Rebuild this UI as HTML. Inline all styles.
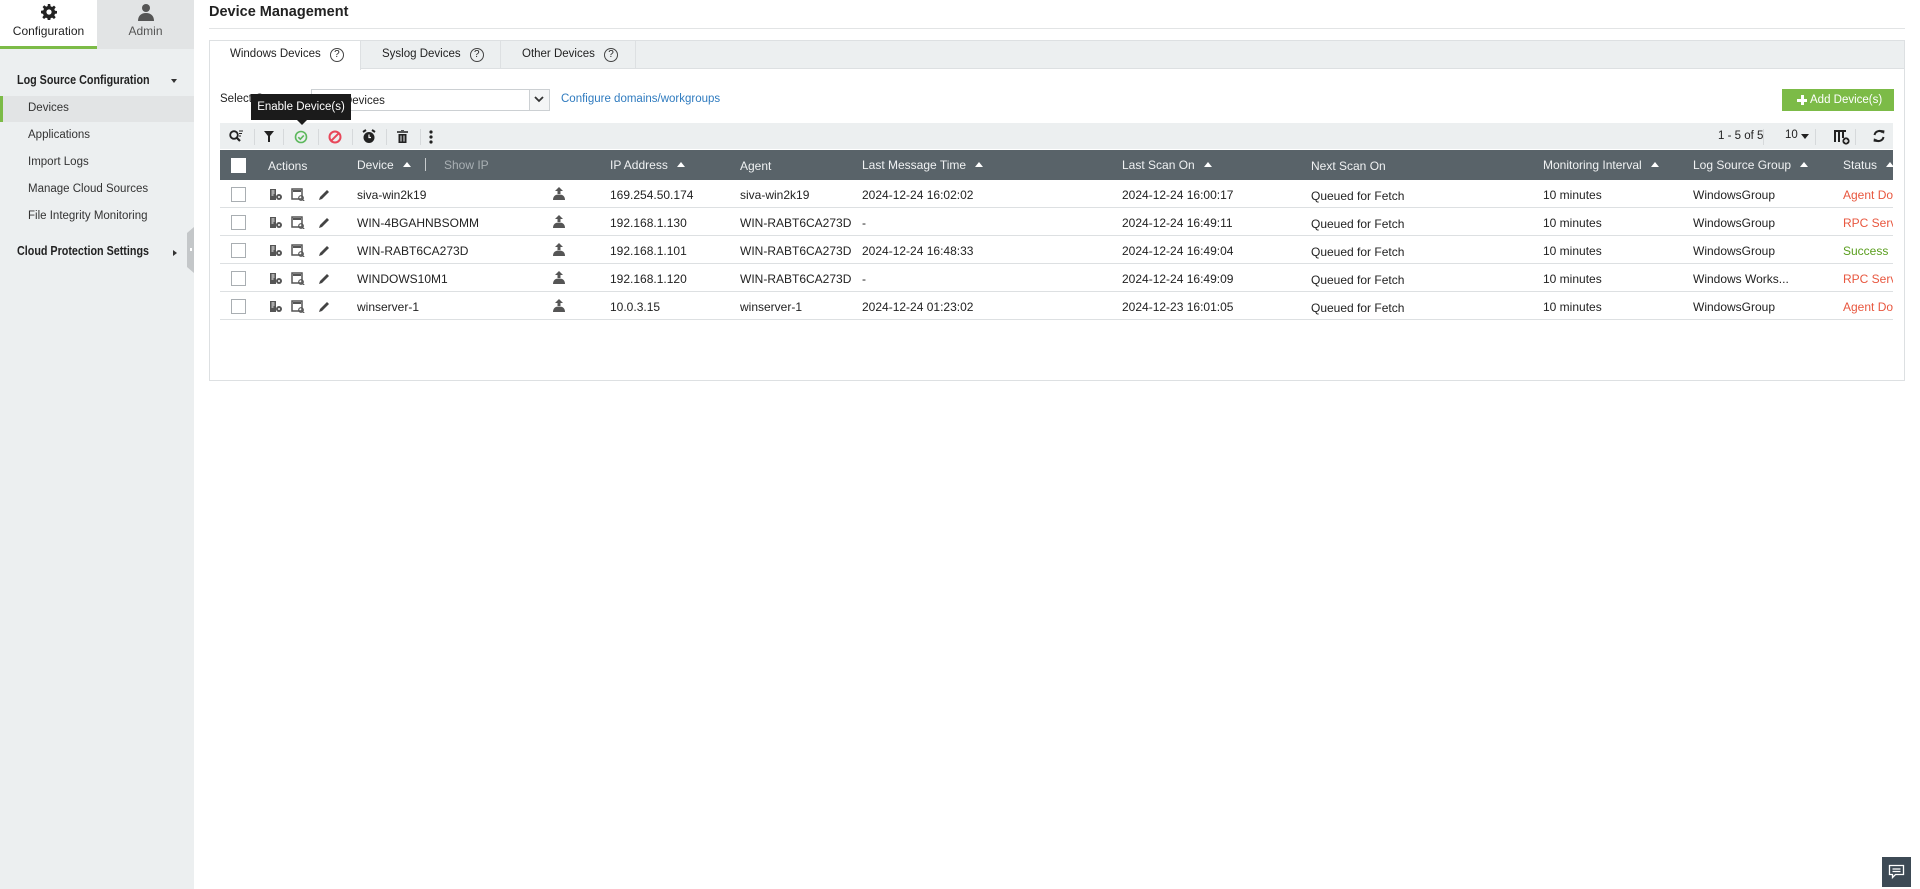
<!DOCTYPE html>
<html><head><meta charset="utf-8">
<style>
*{box-sizing:border-box;margin:0;padding:0}
body{width:1920px;height:889px;position:relative;background:#fff;font-family:"Liberation Sans",sans-serif;font-size:12px;color:#222;overflow:hidden}
.a{position:absolute}
.side{left:0;top:0;width:194px;height:889px;background:#eceff0}
.hdr{left:220px;top:150px;width:1673px;height:30px;background:#596369;color:#f0f2f3}
.hdr div{white-space:nowrap}
.row{left:220px;width:1673px;height:28px;border-bottom:1px solid #dde0e2}
.cb{width:15px;height:15px;border:1px solid #a9aeb2;background:#fff}
.tri{display:inline-block;width:0;height:0;border-left:4px solid transparent;border-right:4px solid transparent;border-bottom:5px solid #fff;margin-left:9px;vertical-align:2px}
.sep{width:1px;height:16px;background:#d6d9db;top:129px}
.red{color:#e8573f}.grn{color:#5a9e1e}
.sh{font-weight:bold;font-size:12.5px;transform:scaleX(0.86);transform-origin:left;white-space:nowrap}
</style></head><body>
<div class="a side"></div>
<div class="a" style="left:0;top:0;width:97px;height:46px;background:#fff"></div>
<div class="a" style="left:0;top:46px;width:97px;height:3px;background:#7cbb47"></div>
<div class="a" style="left:97px;top:0;width:97px;height:49px;background:#e2e4e5"></div>
<svg class="a" style="left:41px;top:4px" width="16" height="16" viewBox="0 0 16 16"><path fill="#222" d="M6.8 0h2.4l.4 2.3 1.5.7 1.9-1.4 1.7 1.7-1.4 1.9.7 1.5 2.3.4v2.4l-2.3.4-.7 1.5 1.4 1.9-1.7 1.7-1.9-1.4-1.5.7-.4 2.3H6.8l-.4-2.3-1.5-.7-1.9 1.4-1.7-1.7 1.4-1.9-.7-1.5L0 9.2V6.8l2.3-.4.7-1.5-1.4-1.9 1.7-1.7 1.9 1.4 1.5-.7z"/><circle cx="8" cy="8" r="2.6" fill="#fff"/></svg>
<div class="a" style="left:0;top:24px;width:97px;text-align:center;font-size:12px;color:#222">Configuration</div>
<svg class="a" style="left:137px;top:3px" width="18" height="18" viewBox="0 0 18 18"><circle cx="9" cy="5" r="4" fill="#555"/><path fill="#555" d="M1 18c0-5 3-8 8-8s8 3 8 8z"/></svg>
<div class="a" style="left:97px;top:24px;width:97px;text-align:center;color:#555">Admin</div>
<div class="a sh" style="left:17px;top:73px">Log Source Configuration</div>
<div class="a" style="left:171px;top:79px;border-left:3.5px solid transparent;border-right:3.5px solid transparent;border-top:4px solid #333"></div>
<div class="a" style="left:0;top:96px;width:194px;height:26px;background:#e2e4e5;border-left:3px solid #7cbb47"></div>
<div class="a" style="left:28px;top:102px;font-size:11.5px;color:#333">Devices</div>
<div class="a" style="left:28px;top:129px;font-size:11.5px;color:#333">Applications</div>
<div class="a" style="left:28px;top:156px;font-size:11.5px;color:#333">Import Logs</div>
<div class="a" style="left:28px;top:183px;font-size:11.5px;color:#333">Manage Cloud Sources</div>
<div class="a" style="left:28px;top:210px;font-size:11.5px;color:#333">File Integrity Monitoring</div>
<div class="a sh" style="left:17px;top:244px">Cloud Protection Settings</div>
<div class="a" style="left:173px;top:250px;border-top:3.5px solid transparent;border-bottom:3.5px solid transparent;border-left:4px solid #333"></div>
<svg class="a" style="left:187px;top:227px" width="7" height="46"><path d="M7 0V46L0 40V6z" fill="#c4c7c9"/><rect x="3" y="21" width="2" height="3" fill="#fff"/></svg>
<div class="a" style="left:209px;top:4px;font-size:14.5px;font-weight:bold;color:#222">Device Management</div>
<div class="a" style="left:209px;top:28px;width:1696px;height:1px;background:#e2e4e5"></div>
<div class="a" style="left:209px;top:40px;width:1696px;height:341px;border:1px solid #dde0e2"></div>
<div class="a" style="left:210px;top:41px;width:1694px;height:28px;background:#eceff0;border-bottom:1px solid #dde0e2"></div>
<div class="a" style="left:210px;top:41px;width:151px;height:29px;background:#fff;border-right:1px solid #dde0e2"></div>
<div class="a" style="left:361px;top:41px;width:140px;height:28px;border-right:1px solid #dde0e2"></div>
<div class="a" style="left:501px;top:41px;width:135px;height:28px;border-right:1px solid #dde0e2"></div>
<div class="a" style="left:230px;top:48px;font-size:11.5px">Windows Devices <span style="display:inline-block;width:14px;height:14px;border:1px solid #444;border-radius:50%;text-align:center;font-size:10px;line-height:12px;margin-left:6px">?</span></div>
<div class="a" style="left:382px;top:48px;font-size:11.5px">Syslog Devices <span style="display:inline-block;width:14px;height:14px;border:1px solid #444;border-radius:50%;text-align:center;font-size:10px;line-height:12px;margin-left:6px">?</span></div>
<div class="a" style="left:522px;top:48px;font-size:11.5px">Other Devices <span style="display:inline-block;width:14px;height:14px;border:1px solid #444;border-radius:50%;text-align:center;font-size:10px;line-height:12px;margin-left:6px">?</span></div>
<div class="a" style="left:220px;top:93px;font-size:11.5px">Select Category</div>
<div class="a" style="left:311px;top:89px;width:239px;height:22px;border:1px solid #ccd0d3;background:#fff"></div>
<div class="a" style="left:328px;top:95px;font-size:11.5px">All Devices</div>
<div class="a" style="left:529px;top:90px;width:20px;height:20px;border-left:1px solid #ccd0d3;background:#f4f5f6"></div>
<svg class="a" style="left:534px;top:96px" width="10" height="8"><path d="M1 1l4 4 4-4" stroke="#333" stroke-width="1.8" fill="none"/></svg>
<div class="a" style="left:561px;top:93px;font-size:11.5px;color:#2f7bbf">Configure domains/workgroups</div>
<div class="a" style="left:1782px;top:89px;width:112px;height:22px;background:#7cbb47;color:#fff;font-size:11.5px;line-height:22px;padding-left:28px">Add Device(s)</div>
<div class="a" style="left:1797px;top:95px;width:10px;height:10px"><div class="a" style="left:3.5px;top:0;width:3px;height:10px;background:#fff"></div><div class="a" style="left:0;top:3.5px;width:10px;height:3px;background:#fff"></div></div>
<div class="a" style="left:220px;top:123px;width:1673px;height:26px;background:#eceff0"></div>
<svg class="a" style="left:229px;top:130px" width="14" height="13"><circle cx="5" cy="5" r="3.8" stroke="#222" stroke-width="1.8" fill="none"/><path d="M7.5 7.5l3.5 3.5" stroke="#222" stroke-width="2.2"/><path d="M10 1h4M10 3.5h3M10 6h2" stroke="#222" stroke-width="1"/></svg>
<div class="a sep" style="left:254px"></div>
<svg class="a" style="left:264px;top:131px" width="10" height="11"><path d="M0 0h10L6 5v6H4V5z" fill="#222"/></svg>
<div class="a sep" style="left:283px"></div>
<svg class="a" style="left:294px;top:130px" width="14" height="14"><circle cx="7" cy="7" r="5.5" stroke="#5cb85c" stroke-width="1.6" fill="none"/><path d="M4.3 7.2l2 2 3.5-3.8" stroke="#5cb85c" stroke-width="1.6" fill="none"/></svg>
<div class="a sep" style="left:318px"></div>
<svg class="a" style="left:328px;top:130px" width="14" height="14"><circle cx="7" cy="7" r="5.5" stroke="#e8475a" stroke-width="2" fill="none"/><path d="M3.3 10.7l7.4-7.4" stroke="#e8475a" stroke-width="2"/></svg>
<div class="a sep" style="left:352px"></div>
<svg class="a" style="left:362px;top:129px" width="14" height="15"><circle cx="7" cy="8.5" r="5.5" fill="#222"/><path d="M1 3l3-2M13 3l-3-2" stroke="#222" stroke-width="2"/><path d="M7 5.5v3h2" stroke="#fff" stroke-width="1.2" fill="none"/></svg>
<div class="a sep" style="left:386px"></div>
<svg class="a" style="left:397px;top:130px" width="11" height="13"><path d="M0 2h11M4 0h3" stroke="#222" stroke-width="1.6"/><path d="M1.5 4h8v9h-8z" fill="#222"/><path d="M4 5.5v6M7 5.5v6" stroke="#eceff0" stroke-width="1"/></svg>
<div class="a sep" style="left:420px"></div>
<svg class="a" style="left:429px;top:130px" width="4" height="14"><circle cx="2" cy="2" r="1.6" fill="#222"/><circle cx="2" cy="7" r="1.6" fill="#222"/><circle cx="2" cy="12" r="1.6" fill="#222"/></svg>
<div class="a" style="left:1718px;top:130px;font-size:11.5px">1 - 5 of 5</div>
<div class="a sep" style="left:1763px"></div>
<div class="a" style="left:1785px;top:129px;font-size:11.5px">10</div>
<div class="a" style="left:1801px;top:134px;border-left:4px solid transparent;border-right:4px solid transparent;border-top:5px solid #222"></div>
<div class="a sep" style="left:1815px"></div>
<svg class="a" style="left:1834px;top:130px" width="16" height="15"><path d="M0 0h12v2H0z M0 2h2v10H0z M4 2h2v10H4z M8 2h2v6H8z" fill="#222"/><circle cx="12" cy="11" r="3.6" fill="#222"/><path d="M12 9v4M10 11h4" stroke="#fff" stroke-width="1.2"/></svg>
<div class="a sep" style="left:1855px"></div>
<svg class="a" style="left:1872px;top:129px" width="14" height="14"><path d="M2.5 6A5 5 0 0 1 11 3.5" stroke="#222" stroke-width="2" fill="none"/><path d="M9 1l3.5 0.5-.5 3.5z" fill="#222"/><path d="M11.5 8A5 5 0 0 1 3 10.5" stroke="#222" stroke-width="2" fill="none"/><path d="M5 13l-3.5-.5.5-3.5z" fill="#222"/></svg>
<div class="a" style="left:251px;top:94px;width:100px;height:26px;background:#1b1b1b;color:#fff;font-size:11.5px;line-height:26px;text-align:center">Enable Device(s)</div>
<div class="a" style="left:297px;top:120px;border-left:5px solid transparent;border-right:5px solid transparent;border-top:5px solid #1b1b1b"></div>
<div class="a hdr">
<div class="a" style="left:11px;top:8px;width:15px;height:15px;background:#fff"></div>
<div class="a" style="left:48px;top:9px">Actions</div>
<div class="a" style="left:137px;top:8px">Device<span class="tri"></span></div>
<div class="a" style="left:205px;top:8px;width:1px;height:13px;background:#c8ccce"></div>
<div class="a" style="left:224px;top:8px;color:#a9b0b4">Show IP</div>
<div class="a" style="left:390px;top:8px">IP Address<span class="tri"></span></div>
<div class="a" style="left:520px;top:9px">Agent</div>
<div class="a" style="left:642px;top:8px">Last Message Time<span class="tri"></span></div>
<div class="a" style="left:902px;top:8px">Last Scan On<span class="tri"></span></div>
<div class="a" style="left:1091px;top:9px">Next Scan On</div>
<div class="a" style="left:1323px;top:8px">Monitoring Interval<span class="tri"></span></div>
<div class="a" style="left:1473px;top:8px">Log Source Group<span class="tri"></span></div>
<div class="a" style="left:1623px;top:8px">Status<span class="tri"></span></div>
</div>
<div class="a row" style="top:180px">
<div class="a cb" style="left:11px;top:7px"></div>
<svg class="a" style="left:50px;top:8px" width="64" height="13"><path d="M0 1h6v11H0z" fill="#555"/><path d="M1.5 3h3M1.5 5h3M1.5 7h2" stroke="#fff"/><circle cx="9" cy="9" r="3" fill="#555"/><circle cx="9" cy="9" r="1" fill="#fff"/><path d="M22 1h10v10H22z" fill="none" stroke="#555" stroke-width="1.5"/><path d="M23 2h8v2h-8z" fill="#555"/><circle cx="31" cy="10" r="2.3" fill="none" stroke="#555" stroke-width="1.2"/><path d="M32.5 11.5l2 2" stroke="#555" stroke-width="1.2"/><path d="M49 12l1-3 7-7 2 2-7 7z" fill="#444"/></svg>
<div class="a" style="left:137px;top:8px">siva-win2k19</div>
<svg class="a" style="left:333px;top:7px" width="12" height="13"><path d="M6 0l4 4H7.5v3h-3V4H2z" fill="#555"/><path d="M0 13c0-4 2.5-5.5 6-5.5s6 1.5 6 5.5z" fill="#555"/></svg>
<div class="a" style="left:390px;top:8px">169.254.50.174</div>
<div class="a" style="left:520px;top:8px">siva-win2k19</div>
<div class="a" style="left:642px;top:8px">2024-12-24 16:02:02</div>
<div class="a" style="left:902px;top:8px">2024-12-24 16:00:17</div>
<div class="a" style="left:1091px;top:9px">Queued for Fetch</div>
<div class="a" style="left:1323px;top:8px">10 minutes</div>
<div class="a" style="left:1473px;top:8px">WindowsGroup</div>
<div class="a red" style="left:1623px;top:8px;width:50px;overflow:hidden;white-space:nowrap">Agent Down</div>
</div>
<div class="a row" style="top:208px">
<div class="a cb" style="left:11px;top:7px"></div>
<svg class="a" style="left:50px;top:8px" width="64" height="13"><path d="M0 1h6v11H0z" fill="#555"/><path d="M1.5 3h3M1.5 5h3M1.5 7h2" stroke="#fff"/><circle cx="9" cy="9" r="3" fill="#555"/><circle cx="9" cy="9" r="1" fill="#fff"/><path d="M22 1h10v10H22z" fill="none" stroke="#555" stroke-width="1.5"/><path d="M23 2h8v2h-8z" fill="#555"/><circle cx="31" cy="10" r="2.3" fill="none" stroke="#555" stroke-width="1.2"/><path d="M32.5 11.5l2 2" stroke="#555" stroke-width="1.2"/><path d="M49 12l1-3 7-7 2 2-7 7z" fill="#444"/></svg>
<div class="a" style="left:137px;top:8px">WIN-4BGAHNBSOMM</div>
<svg class="a" style="left:333px;top:7px" width="12" height="13"><path d="M6 0l4 4H7.5v3h-3V4H2z" fill="#555"/><path d="M0 13c0-4 2.5-5.5 6-5.5s6 1.5 6 5.5z" fill="#555"/></svg>
<div class="a" style="left:390px;top:8px">192.168.1.130</div>
<div class="a" style="left:520px;top:8px">WIN-RABT6CA273D</div>
<div class="a" style="left:642px;top:8px">-</div>
<div class="a" style="left:902px;top:8px">2024-12-24 16:49:11</div>
<div class="a" style="left:1091px;top:9px">Queued for Fetch</div>
<div class="a" style="left:1323px;top:8px">10 minutes</div>
<div class="a" style="left:1473px;top:8px">WindowsGroup</div>
<div class="a red" style="left:1623px;top:8px;width:50px;overflow:hidden;white-space:nowrap">RPC Server</div>
</div>
<div class="a row" style="top:236px">
<div class="a cb" style="left:11px;top:7px"></div>
<svg class="a" style="left:50px;top:8px" width="64" height="13"><path d="M0 1h6v11H0z" fill="#555"/><path d="M1.5 3h3M1.5 5h3M1.5 7h2" stroke="#fff"/><circle cx="9" cy="9" r="3" fill="#555"/><circle cx="9" cy="9" r="1" fill="#fff"/><path d="M22 1h10v10H22z" fill="none" stroke="#555" stroke-width="1.5"/><path d="M23 2h8v2h-8z" fill="#555"/><circle cx="31" cy="10" r="2.3" fill="none" stroke="#555" stroke-width="1.2"/><path d="M32.5 11.5l2 2" stroke="#555" stroke-width="1.2"/><path d="M49 12l1-3 7-7 2 2-7 7z" fill="#444"/></svg>
<div class="a" style="left:137px;top:8px">WIN-RABT6CA273D</div>
<svg class="a" style="left:333px;top:7px" width="12" height="13"><path d="M6 0l4 4H7.5v3h-3V4H2z" fill="#555"/><path d="M0 13c0-4 2.5-5.5 6-5.5s6 1.5 6 5.5z" fill="#555"/></svg>
<div class="a" style="left:390px;top:8px">192.168.1.101</div>
<div class="a" style="left:520px;top:8px">WIN-RABT6CA273D</div>
<div class="a" style="left:642px;top:8px">2024-12-24 16:48:33</div>
<div class="a" style="left:902px;top:8px">2024-12-24 16:49:04</div>
<div class="a" style="left:1091px;top:9px">Queued for Fetch</div>
<div class="a" style="left:1323px;top:8px">10 minutes</div>
<div class="a" style="left:1473px;top:8px">WindowsGroup</div>
<div class="a grn" style="left:1623px;top:8px">Success</div>
</div>
<div class="a row" style="top:264px">
<div class="a cb" style="left:11px;top:7px"></div>
<svg class="a" style="left:50px;top:8px" width="64" height="13"><path d="M0 1h6v11H0z" fill="#555"/><path d="M1.5 3h3M1.5 5h3M1.5 7h2" stroke="#fff"/><circle cx="9" cy="9" r="3" fill="#555"/><circle cx="9" cy="9" r="1" fill="#fff"/><path d="M22 1h10v10H22z" fill="none" stroke="#555" stroke-width="1.5"/><path d="M23 2h8v2h-8z" fill="#555"/><circle cx="31" cy="10" r="2.3" fill="none" stroke="#555" stroke-width="1.2"/><path d="M32.5 11.5l2 2" stroke="#555" stroke-width="1.2"/><path d="M49 12l1-3 7-7 2 2-7 7z" fill="#444"/></svg>
<div class="a" style="left:137px;top:8px">WINDOWS10M1</div>
<svg class="a" style="left:333px;top:7px" width="12" height="13"><path d="M6 0l4 4H7.5v3h-3V4H2z" fill="#555"/><path d="M0 13c0-4 2.5-5.5 6-5.5s6 1.5 6 5.5z" fill="#555"/></svg>
<div class="a" style="left:390px;top:8px">192.168.1.120</div>
<div class="a" style="left:520px;top:8px">WIN-RABT6CA273D</div>
<div class="a" style="left:642px;top:8px">-</div>
<div class="a" style="left:902px;top:8px">2024-12-24 16:49:09</div>
<div class="a" style="left:1091px;top:9px">Queued for Fetch</div>
<div class="a" style="left:1323px;top:8px">10 minutes</div>
<div class="a" style="left:1473px;top:8px">Windows Works...</div>
<div class="a red" style="left:1623px;top:8px;width:50px;overflow:hidden;white-space:nowrap">RPC Server</div>
</div>
<div class="a row" style="top:292px">
<div class="a cb" style="left:11px;top:7px"></div>
<svg class="a" style="left:50px;top:8px" width="64" height="13"><path d="M0 1h6v11H0z" fill="#555"/><path d="M1.5 3h3M1.5 5h3M1.5 7h2" stroke="#fff"/><circle cx="9" cy="9" r="3" fill="#555"/><circle cx="9" cy="9" r="1" fill="#fff"/><path d="M22 1h10v10H22z" fill="none" stroke="#555" stroke-width="1.5"/><path d="M23 2h8v2h-8z" fill="#555"/><circle cx="31" cy="10" r="2.3" fill="none" stroke="#555" stroke-width="1.2"/><path d="M32.5 11.5l2 2" stroke="#555" stroke-width="1.2"/><path d="M49 12l1-3 7-7 2 2-7 7z" fill="#444"/></svg>
<div class="a" style="left:137px;top:8px">winserver-1</div>
<svg class="a" style="left:333px;top:7px" width="12" height="13"><path d="M6 0l4 4H7.5v3h-3V4H2z" fill="#555"/><path d="M0 13c0-4 2.5-5.5 6-5.5s6 1.5 6 5.5z" fill="#555"/></svg>
<div class="a" style="left:390px;top:8px">10.0.3.15</div>
<div class="a" style="left:520px;top:8px">winserver-1</div>
<div class="a" style="left:642px;top:8px">2024-12-24 01:23:02</div>
<div class="a" style="left:902px;top:8px">2024-12-23 16:01:05</div>
<div class="a" style="left:1091px;top:9px">Queued for Fetch</div>
<div class="a" style="left:1323px;top:8px">10 minutes</div>
<div class="a" style="left:1473px;top:8px">WindowsGroup</div>
<div class="a red" style="left:1623px;top:8px;width:50px;overflow:hidden;white-space:nowrap">Agent Down</div>
</div>
<div class="a" style="left:1882px;top:857px;width:29px;height:30px;background:#3d4a55"></div>
<svg class="a" style="left:1888px;top:864px" width="17" height="16"><path d="M1.5 1.5h14v9h-8l-3 3v-3h-3z" stroke="#fff" stroke-width="1.3" fill="none"/><path d="M4.5 5h8M4.5 7.5h8" stroke="#fff" stroke-width="1.2"/></svg>
</body></html>
